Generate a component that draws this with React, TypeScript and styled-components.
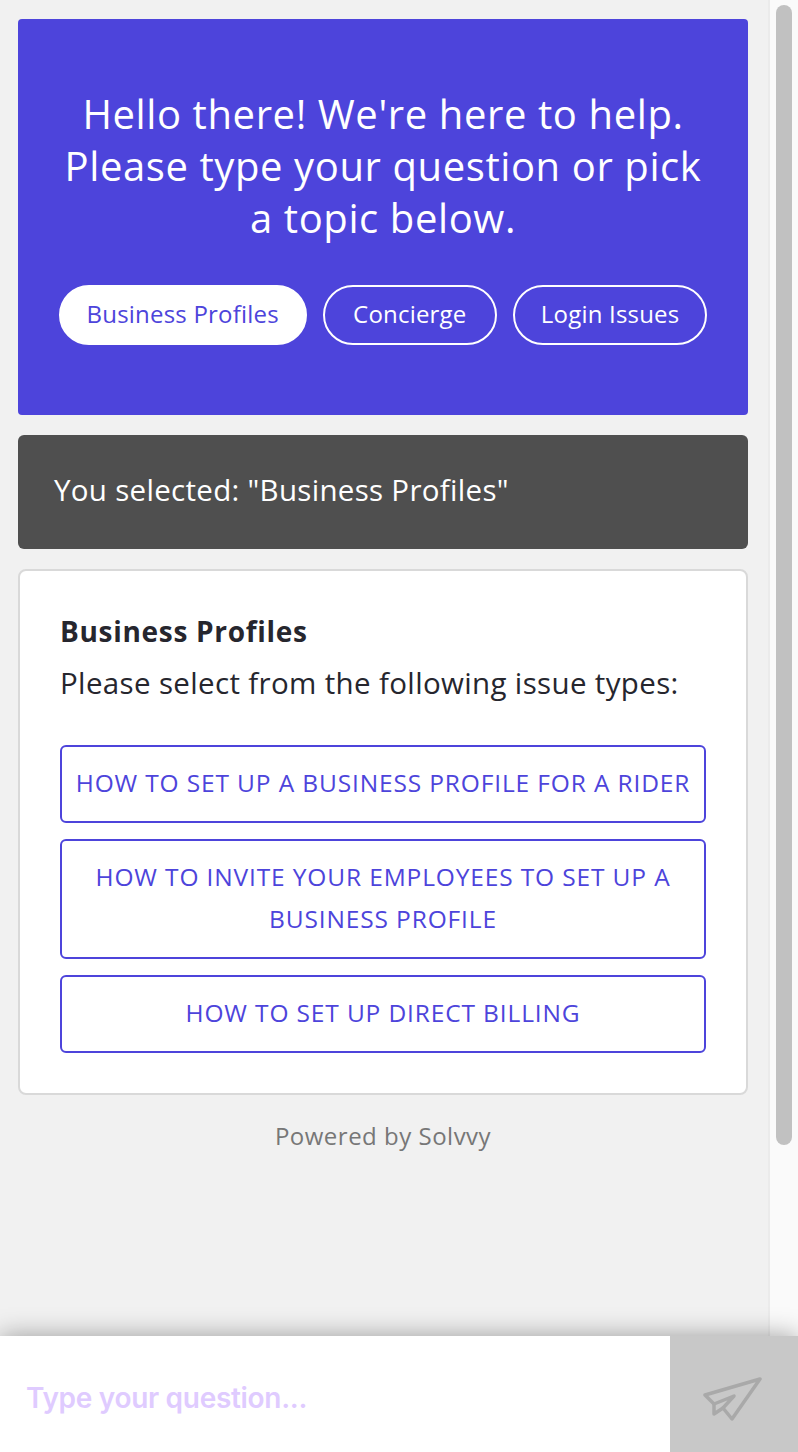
import React from "react";
import styled, { createGlobalStyle } from "styled-components";

const Global = createGlobalStyle`
  html, body { margin: 0; padding: 0; height: 100%; background: #f1f1f1; }
  #root { height: 100%; }
  * { box-sizing: border-box; }
`;

const Page = styled.div`
  height: 1452px;
  display: flex;
  flex-direction: column;
  font-family: "Open Sans", "Lato", sans-serif;
  overflow: hidden;
`;
const Viewport = styled.div`
  flex: 1;
  min-height: 0;
  display: flex;
`;
const Feed = styled.main`
  flex: 1;
  min-width: 0;
  padding: 19px 20px 0 18px;
  display: flex;
  flex-direction: column;
`;
const Rail = styled.div`
  width: 30px;
  background: #fafafa;
  border-left: 2px solid #ebebeb;
  padding: 5px 6px 0 6px;
`;
const Thumb = styled.div`
  height: 1140px;
  border-radius: 8px;
  background: #c1c1c1;
`;
const Hero = styled.section`
  height: 396px;
  background: #4d44db;
  border-radius: 4px;
  padding: 69px 40px 0;
  color: #fff;
  text-align: center;
`;
const Greeting = styled.h1`
  margin: 0;
  font-size: 40px;
  font-weight: 400;
  line-height: 52px;
  letter-spacing: 0.6px;
`;
const Pills = styled.div`
  margin-top: 41px;
  display: flex;
  justify-content: center;
  gap: 16px;
`;
const Pill = styled.button<{ $active?: boolean }>`
  height: 60px;
  min-width: 174px;
  padding: 0 26px 4px;
  border-radius: 30px;
  border: 2px solid #fff;
  background: ${(p) => (p.$active ? "#fff" : "transparent")};
  color: ${(p) => (p.$active ? "#4d44db" : "#fff")};
  font: 400 24px "Open Sans", sans-serif;
  letter-spacing: 0.2px;
`;
const Selected = styled.div`
  margin-top: 20px;
  height: 114px;
  border-radius: 6px;
  background: #4f4f4f;
  color: #fff;
  padding: 0 36px 6px;
  display: flex;
  align-items: center;
  font-size: 29.5px;
  letter-spacing: 0.3px;
`;
const Card = styled.section`
  margin-top: 20px;
  height: 526px;
  background: #fff;
  border: 2px solid #d9d9d9;
  border-radius: 8px;
  padding: 34px 40px 0;
  color: #26262e;
`;
const CardTitle = styled.h2`
  margin: 0;
  font-size: 28px;
  font-weight: 700;
  line-height: 52px;
  letter-spacing: 0.7px;
`;
const CardText = styled.p`
  margin: 0;
  font-size: 29.5px;
  line-height: 52px;
  letter-spacing: 0.35px;
`;
const Options = styled.div`
  margin-top: 36px;
  display: flex;
  flex-direction: column;
  gap: 16px;
`;
const Option = styled.button`
  border: 2px solid #4d44db;
  border-radius: 6px;
  background: #fff;
  color: #4d44db;
  padding: 15px 8px 17px;
  font: 500 24.5px/42px "Open Sans", sans-serif;
  letter-spacing: 0.86px;
  text-transform: uppercase;
  text-align: center;
`;
const Powered = styled.div`
  margin-top: 26px;
  text-align: center;
  color: #777;
  font-size: 24px;
  line-height: 30px;
  letter-spacing: 0.5px;
`;
const Composer = styled.footer`
  position: relative;
  height: 116px;
  display: flex;
  background: #fff;
  box-shadow: 0 0 24px rgba(0, 0, 0, 0.36);
`;
const Question = styled.div`
  flex: 1;
  display: flex;
  align-items: center;
  padding: 8px 0 0 26px;
  color: #dfcbff;
  font-size: 28px;
  font-family: "Inter", sans-serif;
  font-weight: 600;
  letter-spacing: -0.3px;
`;
const Send = styled.button`
  width: 128px;
  border: 0;
  padding: 10px 4px 0 0;
  background: #c8c8c8;
  display: flex;
  align-items: center;
  justify-content: center;
`;

const Plane = () => (
  <svg width="60" height="44" viewBox="0 0 60 44" fill="none" stroke="#a9a9a9" strokeWidth="3.5" strokeLinejoin="round" strokeLinecap="round">
    <path d="M58 2 L3 18 L12 27 L12 37 L21 31 L30 42 Z" />
    <path d="M12 27 L32 19 L21 31" />
  </svg>
);

export default function App() {
  return (
    <Page>
      <Global />
      <Viewport>
        <Feed>
          <Hero>
            <Greeting>Hello there! We're here to help. Please type your question or pick a topic below.</Greeting>
            <Pills>
              <Pill $active>Business Profiles</Pill>
              <Pill>Concierge</Pill>
              <Pill>Login Issues</Pill>
            </Pills>
          </Hero>
          <Selected>You selected: "Business Profiles"</Selected>
          <Card>
            <CardTitle>Business Profiles</CardTitle>
            <CardText>Please select from the following issue types:</CardText>
            <Options>
              <Option>How to set up a business profile for a rider</Option>
              <Option>How to invite your employees to set up a business profile</Option>
              <Option>How to set up direct billing</Option>
            </Options>
          </Card>
          <Powered>Powered by Solvvy</Powered>
        </Feed>
        <Rail><Thumb /></Rail>
      </Viewport>
      <Composer>
        <Question>Type your question...</Question>
        <Send aria-label="Send"><Plane /></Send>
      </Composer>
    </Page>
  );
}
